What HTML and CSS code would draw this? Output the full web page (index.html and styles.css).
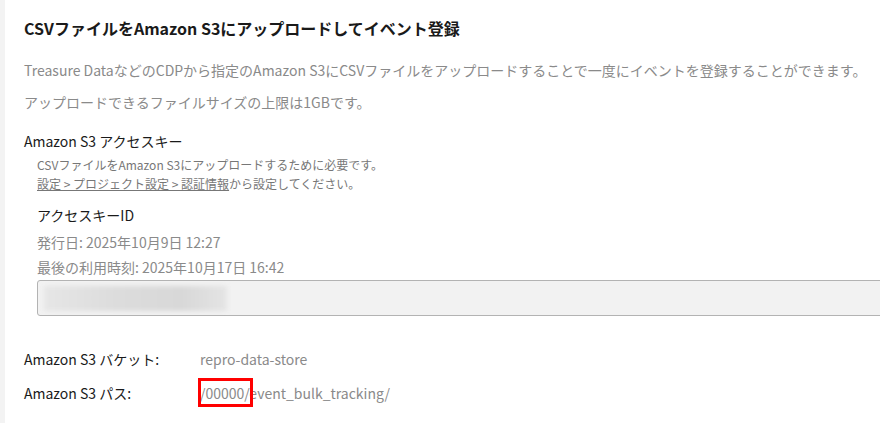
FILE: index.html
```html
<!DOCTYPE html>
<html lang="ja">
<head>
<meta charset="utf-8">
<link rel="stylesheet" href="styles.css">
</head>
<body>
<div class="page">
  <div class="side"></div>
  <main class="main">
    <h1 class="title">CSVファイルをAmazon S3にアップロードしてイベント登録</h1>
    <p class="desc">Treasure DataなどのCDPから指定のAmazon S3にCSVファイルをアップロードすることで一度にイベントを登録することができます。</p>
    <p class="desc">アップロードできるファイルサイズの上限は1GBです。</p>

    <h2 class="section">Amazon S3 アクセスキー</h2>
    <div class="indent">
      <p class="note">CSVファイルをAmazon S3にアップロードするために必要です。<br><a class="link" href="#">設定 &gt; プロジェクト設定 &gt; 認証情報</a>から設定してください。</p>
      <h3 class="sub">アクセスキーID</h3>
      <p class="meta first">発行日: 2025年10月9日 12:27</p>
      <p class="meta">最後の利用時刻: 2025年10月17日 16:42</p>
      <div class="field"><div class="blurred"></div></div>
    </div>

    <dl class="info">
      <div class="row"><dt>Amazon S3 バケット:</dt><dd>repro-data-store</dd></div>
      <div class="row"><dt>Amazon S3 パス:</dt><dd><span class="mark">/00000</span>/event_bulk_tracking/</dd></div>
    </dl>
  </main>
</div>
</body>
</html>
```

FILE: styles.css
```css
html, body {
  margin: 0;
  padding: 0;
  background: #fff;
  overflow: hidden;
}
body {
  font-family: "Noto Sans CJK JP", "Noto Sans", sans-serif;
  color: #222;
}
.page {
  display: flex;
  width: 980px;
  min-height: 423px;
}
.side {
  width: 5px;
  flex: 0 0 5px;
  background: #f3f3f3;
}
.main {
  flex: 1;
  padding: 16px 0 0 19px;
}
.title {
  margin: 0 0 14px;
  font-size: 16px;
  line-height: 24px;
  font-weight: 700;
  color: #1a1a1a;
}
.desc {
  margin: 0;
  font-size: 14px;
  line-height: 32px;
  color: #8a8a8a;
}
.section {
  margin: 13px 0 0;
  font-size: 14px;
  line-height: 20px;
  font-weight: 400;
  color: #1a1a1a;
}
.indent {
  padding-left: 13px;
}
.note {
  margin: 4px 0 0;
  font-size: 12px;
  line-height: 19px;
  color: #777;
}
.link {
  color: #777;
  text-decoration: underline;
}
.sub {
  margin: 12px 0 0;
  font-size: 14px;
  line-height: 20px;
  font-weight: 400;
  color: #1a1a1a;
}
.meta {
  margin: 0;
  font-size: 14px;
  line-height: 25px;
  color: #8a8a8a;
}
.meta.first {
  margin-top: 5px;
}
.field {
  margin-top: 0;
  height: 34px;
  border: 1px solid #b3b3b3;
  border-radius: 3px;
  background: #f2f2f2;
  display: flex;
  align-items: center;
  padding-left: 6px;
}
.blurred {
  width: 183px;
  height: 25px;
  background: linear-gradient(90deg, #e6e6e6 0%, #dcdcdc 40%, #d8d8d8 75%, #e4e4e4 100%);
  filter: blur(2px);
}
.info {
  margin: 26px 0 0;
}
.row {
  display: flex;
  font-size: 14px;
  line-height: 34px;
}
.row dt {
  width: 176px;
  color: #1a1a1a;
}
.row dd {
  margin: 0;
  color: #8a8a8a;
}
.mark {
  position: relative;
}
.mark::after {
  content: "";
  position: absolute;
  left: -2px;
  right: -9px;
  top: -5px;
  bottom: -4px;
  border: 3px solid #ff0000;
}
```
